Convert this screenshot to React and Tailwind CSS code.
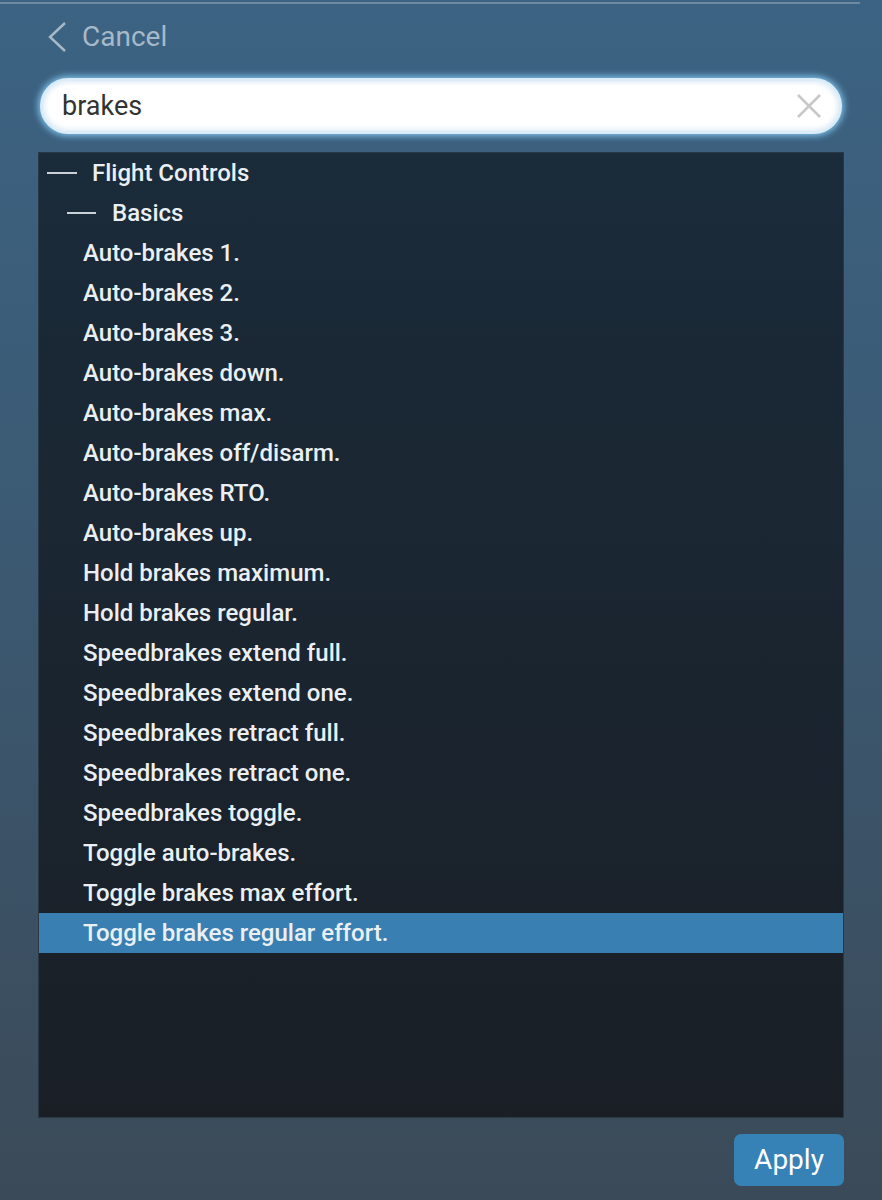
const items = [
  'Auto-brakes 1.',
  'Auto-brakes 2.',
  'Auto-brakes 3.',
  'Auto-brakes down.',
  'Auto-brakes max.',
  'Auto-brakes off/disarm.',
  'Auto-brakes RTO.',
  'Auto-brakes up.',
  'Hold brakes maximum.',
  'Hold brakes regular.',
  'Speedbrakes extend full.',
  'Speedbrakes extend one.',
  'Speedbrakes retract full.',
  'Speedbrakes retract one.',
  'Speedbrakes toggle.',
  'Toggle auto-brakes.',
  'Toggle brakes max effort.',
  'Toggle brakes regular effort.',
];

export default function App() {
  return (
    <div
      className="w-[882px] h-[1200px] overflow-hidden bg-gradient-to-b from-[#3c6383] via-[#3b5870] to-[#3b4a58] flex flex-col"
      style={{ fontFamily: 'Roboto, "Liberation Sans", sans-serif' }}
    >
      {/* Top rule */}
      <div className="mt-[2px] h-[2px] w-[860px] bg-[#6f8aa0]" />

      {/* Cancel */}
      <div className="h-[64px] flex items-center pl-[46px] pt-[2px] text-[#a7b9c8]">
        <svg width="22" height="32" viewBox="0 0 22 32" fill="none" stroke="currentColor" strokeWidth="2.4">
          <path d="M19 2 L4 16 L19 30" />
        </svg>
        <span className="ml-[14px] text-[28px] leading-none">Cancel</span>
      </div>

      {/* Search */}
      <div className="mt-[10px] mx-[40px] h-[56px] rounded-full bg-white border-[3px] border-[#d9ecf8] shadow-[0_0_6px_2px_#7fc0ea,inset_0_0_6px_#c9def0] flex items-center pl-[19px] pr-[16px]">
        <span className="flex-1 text-[27px] text-[#333] leading-none">brakes</span>
        <svg width="28" height="28" viewBox="0 0 28 28" stroke="#c8c8c8" strokeWidth="2.6">
          <path d="M3 3 L25 25 M25 3 L3 25" />
        </svg>
      </div>

      {/* List */}
      <div className="mt-[18px] mx-[38px] h-[966px] bg-gradient-to-b from-[#1a2b3a] to-[#1a1f26] border border-[#2a3846] flex flex-col text-[24px] font-medium text-[#eaeff3]">
        <div className="h-[40px] flex items-center pl-[8px]">
          <span className="w-[30px] h-[2px] bg-[#c9d2d9]" />
          <span className="ml-[15px]">Flight Controls</span>
        </div>
        <div className="h-[40px] flex items-center pl-[28px]">
          <span className="w-[29px] h-[2px] bg-[#c9d2d9]" />
          <span className="ml-[16px]">Basics</span>
        </div>
        {items.map((t, i) => (
          <div
            key={t}
            className={`h-[40px] flex items-center pl-[44px] ${i === items.length - 1 ? 'bg-[#3a7fb1]' : ''}`}
          >
            {t}
          </div>
        ))}
      </div>

      {/* Apply */}
      <div className="mt-[16px] flex justify-end pr-[38px]">
        <button className="w-[110px] h-[52px] rounded-[7px] bg-[#3681b5] text-white text-[28px] leading-none">
          Apply
        </button>
      </div>
    </div>
  );
}
